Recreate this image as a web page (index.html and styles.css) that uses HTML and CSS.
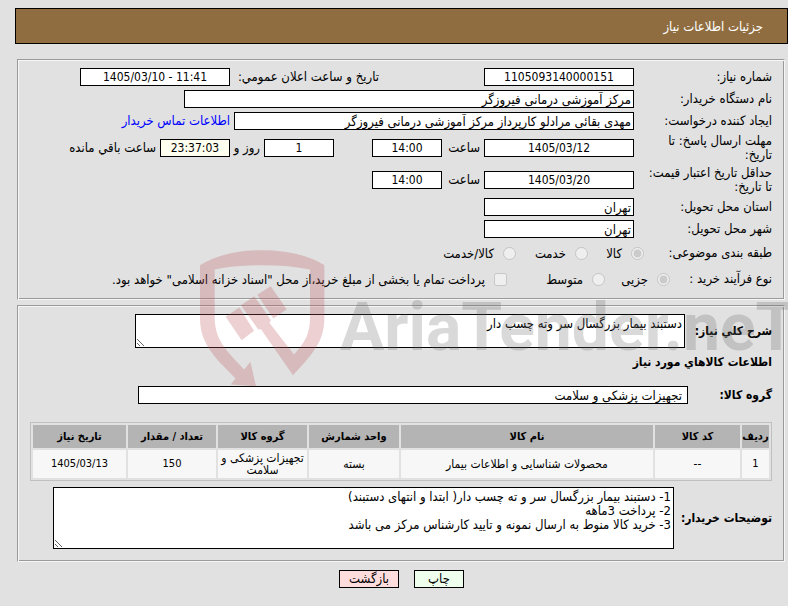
FILE: index.html
```html
<!DOCTYPE html>
<html lang="fa" dir="rtl">
<head>
<meta charset="utf-8">
<title>جزئیات اطلاعات نیاز</title>
<link rel="stylesheet" href="styles.css">
</head>
<body>
<header class="title-bar"><h1>جزئیات اطلاعات نیاز</h1></header>
<main>
  <section class="panel panel-info">
    <div class="row">
      <label class="name" for="num">شماره نیاز:</label>
      <input class="box mid w150" id="num" value="1105093140000151" readonly>
      <label class="announce" for="pub">تاریخ و ساعت اعلان عمومي:</label>
      <input class="box mid w150" id="pub" dir="ltr" value="1405/03/10 - 11:41" readonly>
    </div>
    <div class="row">
      <label class="name" for="org">نام دستگاه خریدار:</label>
      <input class="box w450" id="org" value="مرکز آموزشی درمانی فیروزگر" readonly>
    </div>
    <div class="row">
      <label class="name" for="creator">ایجاد کننده درخواست:</label>
      <input class="box w400" id="creator" value="مهدی بقائی مرادلو کارپرداز مرکز آموزشی درمانی فیروزگر" readonly>
      <a href="#contact">اطلاعات تماس خریدار</a>
    </div>
    <div class="row tall">
      <label class="name" for="due">مهلت ارسال پاسخ: تا<br>تاریخ:</label>
      <input class="box mid w150" id="due" value="1405/03/12" readonly>
      <label class="hour" for="due-h">ساعت</label>
      <input class="box mid w70" id="due-h" value="14:00" readonly>
      <input class="box mid w70 days" id="days" value="1" readonly>
      <label class="and" for="days">روز و</label>
      <input class="box mid w70 timer" id="left" value="23:37:03" readonly>
      <label for="left">ساعت باقي مانده</label>
    </div>
    <div class="row tall">
      <label class="name" for="valid">حداقل تاریخ اعتبار قیمت:<br>تا تاریخ:</label>
      <input class="box mid w150" id="valid" value="1405/03/20" readonly>
      <label class="hour" for="valid-h">ساعت</label>
      <input class="box mid w70" id="valid-h" value="14:00" readonly>
    </div>
    <div class="row">
      <label class="name" for="prov">استان محل تحویل:</label>
      <input class="box w150" id="prov" value="تهران" readonly>
    </div>
    <div class="row">
      <label class="name" for="city">شهر محل تحویل:</label>
      <input class="box w150" id="city" value="تهران" readonly>
    </div>
    <div class="row choices">
      <span class="name subject">طبقه بندی موضوعی:</span>
      <label class="choice c1"><input type="radio" name="subject" checked disabled><span>کالا</span></label>
      <label class="choice c2"><input type="radio" name="subject" disabled><span>خدمت</span></label>
      <label class="choice"><input type="radio" name="subject" disabled><span>کالا/خدمت</span></label>
    </div>
    <div class="row choices">
      <span class="name process">نوع فرآیند خرید :</span>
      <label class="choice c3"><input type="radio" name="process" checked disabled><span>جزیی</span></label>
      <label class="choice c4"><input type="radio" name="process" disabled><span>متوسط</span></label>
      <label class="choice"><input type="checkbox" disabled><span>پرداخت تمام یا بخشی از مبلغ خرید،از محل "اسناد خزانه اسلامی" خواهد بود.</span></label>
    </div>
  </section>

  <section class="panel panel-goods">
    <div class="line">
      <label class="strong need" for="desc">شرح کلي نیاز:</label>
      <textarea class="box desc" id="desc" readonly>دستبند بیمار بزرگسال سر وته چسب دار</textarea>
    </div>
    <h2>اطلاعات کالاهاي مورد نیاز</h2>
    <div class="line">
      <label class="strong kind" for="grp">گروه کالا:</label>
      <input class="box w550" id="grp" value="تجهیزات پزشکی و سلامت" readonly>
    </div>
    <table>
      <colgroup><col class="k1"><col class="k2"><col class="k3"><col class="k4"><col class="k5"><col class="k6"><col class="k7"></colgroup>
      <thead>
        <tr><th>ردیف</th><th>کد کالا</th><th>نام کالا</th><th>واحد شمارش</th><th>گروه کالا</th><th>تعداد / مقدار</th><th>تاریخ نیاز</th></tr>
      </thead>
      <tbody>
        <tr><td class="num">1</td><td>--</td><td>محصولات شناسایی و اطلاعات بیمار</td><td>بسته</td><td>تجهیزات پزشکی و سلامت</td><td class="num">150</td><td class="num">1405/03/13</td></tr>
      </tbody>
    </table>
    <div class="line">
      <label class="strong notes-name" for="notes">توضیحات خریدار:</label>
      <textarea class="box notes" id="notes" readonly>1- دستبند بیمار بزرگسال سر و ته چسب دار( ابتدا و انتهای دستبند)
2- پرداخت 3ماهه
3- خرید کالا منوط به ارسال نمونه و تایید کارشناس مرکز می باشد</textarea>
    </div>
  </section>

  <div class="actions">
    <button class="print" type="button">چاپ</button>
    <button class="back" type="button">بازگشت</button>
  </div>
</main>

<div class="watermark" dir="ltr">
  <svg width="125" height="137" viewBox="30 30 375 410" aria-hidden="true">
    <path d="M30 75Q105 30 215 30Q330 30 403 75V235C403 305 365 345 309 405L213 267L205 268L153 195L193 168L243 240L238 248L312 343C345 307 360 280 360 235V88Q300 75 215 75Q130 75 74 88V235C76 305 115 337 163 388L181 365L198 438L122 433L137 415C90 365 30 320 30 235Z"/>
    <path d="M107 230L148 202L192 272L155 300ZM202 164L242 138L290 207L250 235Z"/>
  </svg>
  <span>AriaTender.neT</span>
</div>
</body>
</html>
```
FILE: styles.css
```css
* { box-sizing: border-box; }
body { margin: 0; background: #e1e1e1; color: #000; font: 13px/14px "DejaVu Sans Condensed", "DejaVu Sans", sans-serif; position: relative; overflow-x: hidden; }
.title-bar { margin: 8px 0 15px 15px; height: 36px; padding: 2px 24px 0; border: 1px solid #000; background: #8f6d40; color: #fff; display: flex; align-items: center; }
h1 { margin: 0; font-size: 13px; font-weight: normal; }
.panel { margin: 0 3px 5px 17px; border: 1px solid; border-color: #9a9a9a #f6f6f6 #f6f6f6 #9a9a9a; box-shadow: inset 1px 1px #f6f6f6, inset -1px -1px #9a9a9a; padding: 6px 12px 7px; }
.panel-goods { padding: 8px 12px 12px; }
.row { display: flex; align-items: center; gap: 4px; min-height: 22px; white-space: nowrap; }
.tall { min-height: 32px; }
.name { width: 134px; flex: none; }
.box { flex: none; margin: 0; height: 18px; border: 1px solid #000; border-radius: 0; background: #fff; color: #000; padding: 0 2px; font: inherit; }
.box.mid { text-align: center; font-size: 12px; }
.w70 { width: 70px; }
.w150 { width: 150px; }
.w400 { width: 400px; }
.w450 { width: 450px; }
.w550 { width: 550px; padding: 0 5px; }
.announce { width: 145px; margin-right: 101px; }
.hour { width: 34px; }
.days { margin-right: 34px; }
.and { width: 26px; }
.box.timer { background: #ffffef; }
a { color: #00f; text-decoration: none; }
.choices { min-height: 26px; gap: 0; }
.subject { width: 128px; }
.process { width: 102px; }
.choice { display: flex; align-items: center; gap: 9px; }
.choice input { margin: 0; width: 13px; height: 13px; }
.choice span { padding-top: 2px; }
.c1 { width: 56px; }
.c2 { width: 72px; }
.c3 { width: 65px; }
.c4 { width: 98px; }
.line { display: flex; align-items: center; gap: 4px; }
.strong, h2 { font-weight: bold; font-size: 12px; white-space: nowrap; }
h2 { margin: 7px 0 17px; line-height: 14px; }
textarea.box { padding: 2px; line-height: 14px; display: block; }
.need { width: 83px; }
.desc { width: 550px; height: 34px; }
.kind { width: 80px; }
table { width: 100%; margin: 18px 0 6px; table-layout: fixed; border: 1px solid #c0c0c0; border-spacing: 2px; font-size: 12px; line-height: 12px; text-align: center; }
th { background: #b4b4b4; height: 23px; padding: 0; font-size: 11px; }
td { background: #f7f7f7; height: 28px; padding: 0; }
.num { font-size: 11px; }
.k1 { width: 27px; }
.k2 { width: 85px; }
.k4 { width: 90px; }
.k5 { width: 89px; }
.k6 { width: 88px; }
.k7 { width: 93px; }
.notes-name { width: 94px; }
.notes { width: 621px; height: 62px; }
.actions { display: flex; justify-content: center; gap: 15px; margin: 8px 0 8px 15px; }
button { height: 18px; padding: 0; border: 1px solid #000; font: inherit; color: #000; }
.print { width: 50px; background: #efe; }
.back { width: 60px; background: #fdd; }
.watermark { position: absolute; left: 200px; top: 250px; display: flex; gap: 15px; pointer-events: none; color: rgba(105,105,105,.25); font: bold 66px/156px "Roboto", sans-serif; white-space: nowrap; }
.watermark svg { flex: none; fill: rgba(185,81,87,.27); }
```
